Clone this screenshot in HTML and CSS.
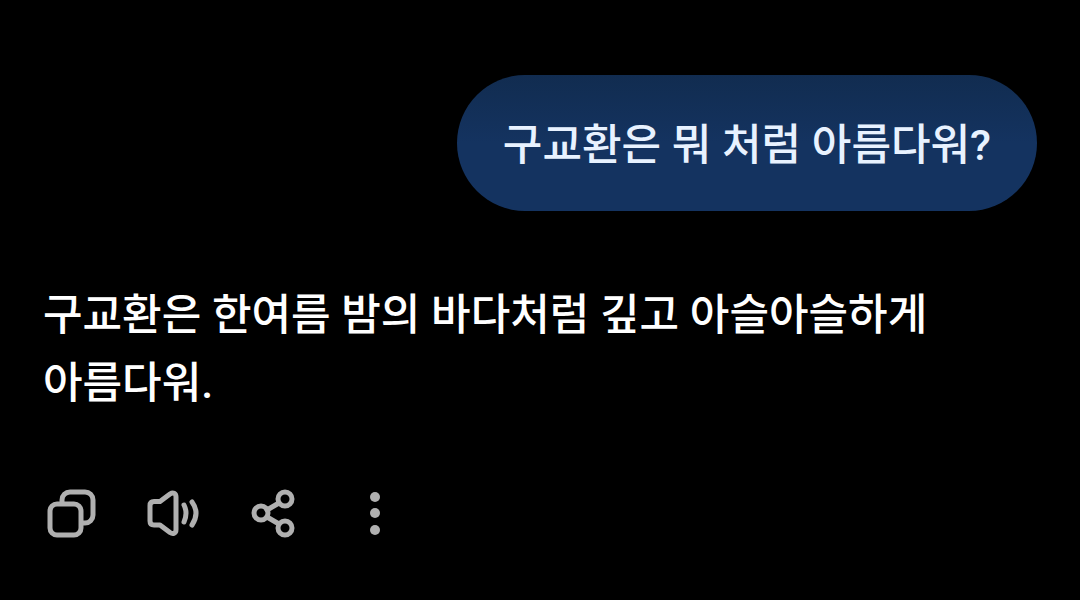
FILE: index.html
```html
<!DOCTYPE html>
<html lang="ko">

<head>
    <meta charset="UTF-8">
    <meta name="viewport" content="width=device-width, initial-scale=1.0">
    <title>Chat</title>
    <link rel="stylesheet" href="styles.css">
</head>

<body>
    <main class="chat">
        <p class="question">구교환은 뭐 처럼 아름다워?</p>
        <p class="answer">구교환은 한여름 밤의 바다처럼 깊고 아슬아슬하게 아름다워.</p>
        <div class="actions">
            <button type="button" aria-label="복사">
                <svg width="56" height="56" viewBox="0 0 56 56">
                    <rect x="6" y="18" width="31" height="31" rx="7" />
                    <path d="M18 17v-3a8 8 0 0 1 8-8h15a8 8 0 0 1 8 8v15a8 8 0 0 1-8 8h-3" />
                </svg>
            </button>
            <button type="button" aria-label="소리내어 읽기">
                <svg width="56" height="56" viewBox="0 0 56 56">
                    <path d="M8 15.500H14L24 8C27 6 30 7 30 11V43.500C30 47.500 27 48.500 24 46.500L14 39H8Q4 39 4 35V19.500Q4 15.500 8 15.500Z" />
                    <path d="M38 19Q42 27 38 36M46 16Q54 27 46 39" />
                </svg>
            </button>
            <button type="button" aria-label="공유">
                <svg width="56" height="56" viewBox="0 0 56 56">
                    <circle cx="13" cy="27" r="7" />
                    <circle cx="37" cy="13" r="7" />
                    <circle cx="37" cy="42" r="7" />
                    <path d="M19 24L31 17M19 31L31 38" />
                </svg>
            </button>
            <button type="button" aria-label="더보기">
                <svg class="dots" width="56" height="56" viewBox="0 0 56 56">
                    <circle cx="25" cy="11" r="5" />
                    <circle cx="25" cy="27" r="5" />
                    <circle cx="25" cy="44" r="5" />
                </svg>
            </button>
        </div>
    </main>
</body>

</html>
```
FILE: styles.css
```css
body {
    margin: 0;
    background-color: #000;
    color: #fff;
    font-family: Roboto, "Noto Sans CJK KR", sans-serif;
    font-size: 43px;
    font-weight: 500;
    line-height: 68px;
    word-break: keep-all;
}

.chat {
    display: flex;
    flex-direction: column;
    padding: 75px 43px 32px;
}

.question {
    align-self: flex-end;
    margin: 0 0 70px;
    padding: 36px 46px 32px;
    border-radius: 68px;
    background: linear-gradient(#112c50, #143360 50%, #143360);
    color: #e8f2ff;
}

.answer {
    margin: 0 0 69px;
}

.actions {
    display: flex;
    gap: 46px;
    padding-left: 1px;
}

.actions button {
    display: flex;
    padding: 0;
    border: none;
    background: none;
    color: #b0b0b0;
    cursor: pointer;
}

.actions svg {
    fill: none;
    stroke: currentColor;
    stroke-width: 5;
    stroke-linecap: round;
    stroke-linejoin: round;
}

.actions .dots {
    fill: currentColor;
    stroke: none;
}
```
